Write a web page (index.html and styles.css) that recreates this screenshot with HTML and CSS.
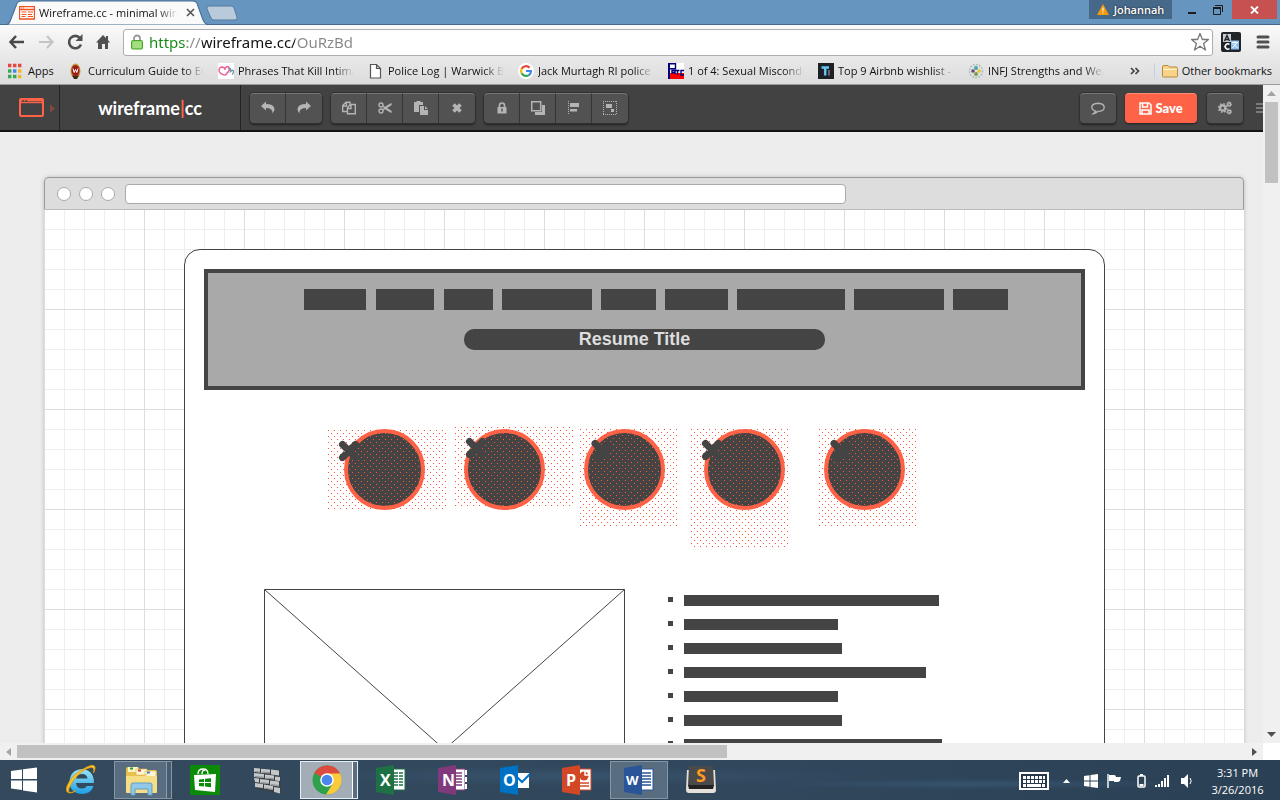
FILE: index.html
```html
<!DOCTYPE html>
<html lang="en">
<head>
<meta charset="utf-8">
<title>Wireframe.cc - minimal wireframing tool</title>
<link rel="stylesheet" href="styles.css">
</head>
<body>
<header class="browser">
  <div class="tabstrip">
    <div class="tab">
      <svg class="tab-shape" viewBox="0 0 204 24" preserveAspectRatio="none"><path d="M0 24C5 24 6 21 7 18L13 3Q14 1 17 1H187Q190 1 191 3L197 19Q199 24 204 24Z" fill="#fafafa" stroke="#44698e"/></svg>
      <svg class="tab-icon" viewBox="0 0 16 14"><path d="M.5 .5h15v12.500h-15zM0 3.500h16" fill="#fff" stroke="#f4511e" stroke-width="1.300"/><path d="M2.500 6h5M2.500 8.500h5M2.500 10.500h4M9 6h5M9 8.500h4M9 10.500h5M2 2h1M4 2h1" stroke="#f4511e"/></svg>
      <span class="tab-title fade">Wireframe.cc - minimal wireframing</span>
      <button class="plain tab-close" aria-label="Close tab"><svg width="9" height="9" viewBox="0 0 9 9"><path d="M1 1l7 7M8 1l-7 7" stroke="#555" stroke-width="1.600"/></svg></button>
    </div>
    <button class="plain newtab" aria-label="New tab"><svg width="32" height="16" viewBox="0 0 32 16"><path d="M3 1h22q2 0 3 2l3 9q1 3-2 3H8q-2 0-3-2L1 4q-1-3 2-3z" fill="#b9cbdb" stroke="#55799d"/></svg></button>
    <button class="plain user"><svg width="12" height="11" viewBox="0 0 12 11"><path d="M6 0l6 11H0z" fill="#f59a0c"/><path d="M6 3.500v4M6 8.500v1" stroke="#fff"/></svg>Johannah</button>
    <div class="winctl">
      <button class="plain" aria-label="Minimize"><svg width="10" height="10" viewBox="0 0 10 10"><path d="M1 8h8" stroke="#1d1d1d" stroke-width="2"/></svg></button>
      <button class="plain" aria-label="Restore"><svg width="12" height="12" viewBox="0 0 12 12"><path d="M1.500 4.500h7v6h-7zM3 1.500h7.500V8" fill="none" stroke="#1d1d1d"/><path d="M1 4h8" stroke="#1d1d1d" stroke-width="2"/></svg></button>
      <button class="plain close" aria-label="Close"><svg width="9" height="8" viewBox="0 0 9 8"><path d="M1 .5l7 7M8 .5l-7 7" stroke="#fff" stroke-width="1.800"/></svg></button>
    </div>
  </div>
  <div class="navbar">
    <button class="plain" aria-label="Back"><svg width="18" height="16" viewBox="0 0 18 16"><path d="M8 2L2.500 8 8 14M3 8h13" fill="none" stroke="#484848" stroke-width="2.500"/></svg></button>
    <button class="plain" aria-label="Forward"><svg width="18" height="16" viewBox="0 0 18 16"><path d="M10 2l5.500 6L10 14M15 8H2" fill="none" stroke="#c4c4c4" stroke-width="2.200"/></svg></button>
    <button class="plain" aria-label="Reload"><svg width="18" height="18" viewBox="0 0 18 18"><path d="M14 5A6.200 6.200 0 1 0 15 11.500" fill="none" stroke="#505050" stroke-width="2.600"/><path d="M16.500 1v7h-7z" fill="#505050"/></svg></button>
    <button class="plain" aria-label="Home"><svg width="16" height="16" viewBox="0 0 16 16"><path d="M8 1L1 8.500h2V15h4v-5h3v5h3V8.500h2L13 6V2h-2v2z" fill="#505050"/></svg></button>
    <label class="omnibox">
      <svg width="12" height="16" viewBox="0 0 12 16"><path d="M3 8V4.500a3 3 0 0 1 6 0V8" fill="none" stroke="#999" stroke-width="1.800"/><rect x=".5" y="6.500" width="11" height="8.500" rx="1" fill="#8fd568" stroke="#4ba32f"/><path d="M2 9h8M2 11h8M2 13h8" stroke="#b6e89b"/></svg>
      <input class="url" type="text" value="https://wireframe.cc/OuRzBd" aria-label="Address">
      <svg width="20" height="20" viewBox="0 0 20 20"><path d="M10 1.500l2.400 6h6l-4.800 4 1.900 6.500L10 14.200 4.500 18l1.900-6.500-4.800-4h6z" fill="#fff" stroke="#777" stroke-width="1.300" stroke-linejoin="round"/></svg>
    </label>
    <button class="plain" aria-label="Translate"><svg width="20" height="20" viewBox="0 0 20 20"><rect width="20" height="20" rx="2" fill="#202429"/><path d="M2 2h8v8H2z" fill="#c9ced3"/><path d="M3.500 9L6 3.500 8.500 9M4.500 7.500h3" fill="none" stroke="#202429" stroke-width="1.400"/><path d="M8.500 12.500a2.600 2.600 0 1 0 0 4" fill="none" stroke="#fff" stroke-width="1.600"/><rect x="10" y="8.500" width="8" height="9" fill="#8dc1f2"/><path d="M11 10.500h6M14 9v2M16 10.500l-4.500 5.500M12 11.500l4.500 4.500" stroke="#fff"/></svg></button>
    <button class="plain menu-btn" aria-label="Menu"><svg width="14" height="14" viewBox="0 0 14 14"><path d="M2 2h10M2 7h10M2 12h10" stroke="#505050" stroke-width="3" stroke-linecap="round"/></svg></button>
  </div>
  <nav class="bookmarks">
    <a href="#" class="bm apps"><svg width="16" height="16" viewBox="0 0 16 16"><path d="M0 2.500h3.400M5 2.500h3.400M10 2.500h3.400" stroke="#e8453c" stroke-width="3.400"/><path d="M0 8h3.400" stroke="#34a853" stroke-width="3.400"/><path d="M5 8h3.400" stroke="#4285f4" stroke-width="3.400"/><path d="M10 8h3.400M10 13.500h3.400" stroke="#f7b529" stroke-width="3.400"/><path d="M0 13.500h3.400M5 13.500h3.400" stroke="#34a853" stroke-width="3.400"/></svg><span>Apps</span></a>
    <a href="#" class="bm"><svg width="16" height="16" viewBox="0 0 16 16"><ellipse cx="7.500" cy="8" rx="5" ry="7.500" fill="#c79a3a"/><ellipse cx="7.500" cy="7.500" rx="4" ry="5.500" fill="#a01a1a"/><path d="M5 5.500l1.200 4 1.300-3 1.300 3 1.200-4" fill="none" stroke="#fff"/><path d="M4 12q3.500 2 7 0l-2 4H6z" fill="#3b2a1a"/></svg><span class="fade">Curriculum Guide to Education</span></a>
    <a href="#" class="bm"><svg width="16" height="16" viewBox="0 0 16 16"><path d="M0 0h16v16H0z" fill="#fff"/><path d="M8 12Q3 12 1.200 8.500 .5 4.500 4 4q2.500 0 3 2.500Q8 2.500 10.500 4q2 2-.5 5l-2.500 3" fill="none" stroke="#ee5f98" stroke-width="1.500"/><path d="M10 5.500q3-1.500 2.500 3 2.500-2.500 3 0 0 2-1.500 3" fill="none" stroke="#6b93a8" stroke-width="1.300"/></svg><span class="fade">Phrases That Kill Intimacy</span></a>
    <a href="#" class="bm"><svg width="16" height="16" viewBox="0 0 16 16"><path d="M2.500 1.500h6l4 4v9.500h-10zM8.500 1.500v4h4" fill="#fff" stroke="#555" stroke-width="1.200"/></svg><span class="fade">Police Log | Warwick Beacon</span></a>
    <a href="#" class="bm"><svg width="16" height="16" viewBox="0 0 16 16"><circle cx="8" cy="8" r="8" fill="#fff"/><g fill="none" stroke-width="2.200"><path d="M11.500 4.600A5 5 0 0 0 3.600 5.800" stroke="#ea4335"/><path d="M3.600 5.800a5 5 0 0 0 0 4.400" stroke="#fbbc05"/><path d="M3.600 10.200a5 5 0 0 0 7.600 1.600" stroke="#34a853"/><path d="M11.200 11.800A5 5 0 0 0 13 8H8" stroke="#4285f4"/></g></svg><span class="fade">Jack Murtagh RI police officer</span></a>
    <a href="#" class="bm"><svg width="16" height="16" viewBox="0 0 16 16"><path d="M0 0h16v16H0z" fill="#fff"/><path d="M2 10h14v6H2z" fill="#f00"/><path d="M0 0h2v16H0z" fill="#00007c"/><path d="M1 .8h6.500v5H1M4 11V7.500h3V11M4 9.500h3M7.500 7.500h4M9.500 7.500V12M16 7.500h-3V12h3" fill="none" stroke="#00007c" stroke-width="1.400"/></svg><span class="fade">1 of 4: Sexual Misconduct</span></a>
    <a href="#" class="bm"><svg width="16" height="16" viewBox="0 0 16 16"><path d="M0 0h16v16H0z" fill="#1d2126"/><path d="M3.500 4.500h7.500M7.200 4v8.500" stroke="#62c4f0" stroke-width="2.500"/><path d="M11 7v5.500" stroke="#667" stroke-width="2"/></svg><span class="fade">Top 9 Airbnb wishlist - Airbnb</span></a>
    <a href="#" class="bm"><svg width="16" height="16" viewBox="0 0 16 16"><circle cx="8" cy="8" r="6.500" fill="none" stroke="#9cb9ac" stroke-width="1.500" stroke-dasharray="1.500 1.500"/><circle cx="8" cy="5" r="2" fill="#49a5ad"/><circle cx="5" cy="8" r="1.800" fill="#6d486f"/><circle cx="11" cy="8" r="1.800" fill="#e3c52c"/><circle cx="8" cy="11" r="2" fill="#77a14d"/></svg><span class="fade">INFJ Strengths and Weaknesses</span></a>
    <button class="plain more" aria-label="More bookmarks"><svg width="10" height="8" viewBox="0 0 10 8"><path d="M1 1l3 3-3 3M5.500 1l3 3-3 3" fill="none" stroke="#444" stroke-width="1.700"/></svg></button>
    <a href="#" class="bm other"><svg width="16" height="16" viewBox="0 0 16 16"><path d="M.5 13V4q0-1.500 1.500-1.500h4L7.500 4H14q1.500 0 1.500 1.500V13q0 1-1 1h-13q-1 0-1-1z" fill="#f7d48a" stroke="#b98a3c"/><path d="M1.500 6.500h13" stroke="#fff1cc"/></svg><span>Other bookmarks</span></a>
  </nav>
</header>

<main class="page">
  <div class="view">
    <div class="appbar">
      <button class="plain logo" aria-label="Template"><svg width="37" height="20" viewBox="0 0 37 20"><rect x="1" y="1" width="23" height="17" rx="1" fill="none" stroke="#ff6347" stroke-width="2"/><path d="M1 4.500h23" stroke="#ff6347" stroke-width="1.400"/><path d="M2 2.500h1.500M5 2.500h1.500M8 2.500h15" stroke="#ff6347" stroke-width="1.400"/><path d="M31 6.500v8l5-4z" fill="#84493e"/></svg></button>
      <a class="brand" href="#">wireframe<i>|</i>cc</a>
      <div class="tools">
        <div class="group">
          <button aria-label="Undo"><svg width="14" height="14" viewBox="0 0 14 14"><path d="M0 5l5-4.500V3q8 0 8.500 5 0 2.500-2 4.500 .5-5.500-6.500-5.500v2.500z"/></svg></button>
          <button aria-label="Redo"><svg width="14" height="14" viewBox="0 0 14 14"><path d="M14 5L9 .5V3Q1 3 .5 8q0 2.500 2 4.500Q2 7 9 7v2.500z"/></svg></button>
        </div>
        <div class="group">
          <button aria-label="Copy"><svg class="ln" width="14" height="14" viewBox="0 0 14 14"><path d="M5 10.500H.7V4.500L4 1.200h4V4M4.500 1v4H1M5.500 12.800V6.500L8.500 3.500h4.800v9.300zM9 3.500v4H5.500"/></svg></button>
          <button aria-label="Cut"><svg class="ln" width="14" height="14" viewBox="0 0 14 14"><circle cx="3" cy="4" r="2"/><circle cx="3" cy="10" r="2"/><path d="M4.600 5.200L13.500 10.500M4.600 8.800L13.500 3.500M6 7l7.500 4.500M6 7l7.500-4.500"/></svg></button>
          <button aria-label="Paste"><svg width="14" height="14" viewBox="0 0 14 14"><path d="M0 1h2.500V0h4v1H9v3H5v7H0z"/><path d="M6 5h4v4h4v5H6zM11 5l3 3h-3z"/></svg></button>
          <button aria-label="Delete"><svg width="14" height="14" viewBox="0 0 14 14"><path d="M3.500 3.500l7 7M10.500 3.500l-7 7" stroke="#b4b4b4" stroke-width="3.600"/></svg></button>
        </div>
        <div class="group">
          <button aria-label="Lock"><svg width="14" height="14" viewBox="0 0 14 14"><path d="M4.500 7V4.500a2.500 2.500 0 0 1 5 0V7" fill="none" stroke="#b4b4b4" stroke-width="1.600"/><path d="M2.500 6h9v6.500h-9z"/><path d="M7 7.500v3" stroke="#555" stroke-width="1.500"/></svg></button>
          <button aria-label="Arrange"><svg width="14" height="14" viewBox="0 0 14 14"><path d="M.7 .7h9v9h-9z" fill="none" stroke="#b4b4b4" stroke-width="1.500"/><path d="M11 4h3v10H4v-3h7z"/></svg></button>
          <button aria-label="Align"><svg width="14" height="14" viewBox="0 0 14 14"><path d="M1.500 0v14" stroke="#b4b4b4" stroke-dasharray="1 1"/><path d="M3 2h9v4H3zM3 8h7v2.500H3z"/></svg></button>
          <button aria-label="Group"><svg width="14" height="14" viewBox="0 0 14 14"><path d="M.5 0v14M13.500 0v14M0 .5h14M0 13.500h14" fill="none" stroke="#b4b4b4" stroke-dasharray="1 1"/><path d="M3 3h6v4H3zM8 8h3v3H8z"/></svg></button>
        </div>
        <span class="spacer"></span>
        <div class="group"><button aria-label="Comments"><svg class="ln" width="14" height="14" viewBox="0 0 14 14"><path d="M5.500 10.300Q1 9.500 .8 6.300 1 2.500 7 2.300q6 .2 6.200 4T7 10.400q-2 2.200-4.500 2.300 1.800-1.200 1.500-2.700"/></svg></button></div>
        <button class="save"><svg width="13" height="13" viewBox="0 0 13 13"><path d="M1 1h9l2 2v9H1zM3.500 1v4h5V1M3 12V8h7v4" fill="none" stroke="#fff" stroke-width="1.500"/></svg>Save</button>
        <div class="group"><button aria-label="Settings"><svg width="14" height="14" viewBox="0 0 14 14"><g fill="none" stroke="#b4b4b4"><circle cx="4.700" cy="7" r="2.600" stroke-width="2.200"/><circle cx="4.700" cy="7" r="4.200" stroke-width="1.500" stroke-dasharray="1.700 1.600"/><circle cx="11.200" cy="3.300" r="1.500" stroke-width="1.500"/><circle cx="11.200" cy="3.300" r="2.400" stroke-dasharray="1 .9"/><circle cx="11.200" cy="10.700" r="1.500" stroke-width="1.500"/><circle cx="11.200" cy="10.700" r="2.400" stroke-dasharray="1 .9"/></g></svg></button></div>
        <button class="plain panel" aria-label="Panel"><svg width="7" height="12" viewBox="0 0 7 12"><path d="M0 2h7M0 6h7M0 10h7" stroke="#b4b4b4" stroke-width="1.200"/></svg></button>
      </div>
    </div>
    <div class="stage">
      <section class="mock">
        <div class="mock-bar"><i></i><i></i><i></i><input type="text" aria-label="Mock address"></div>
        <div class="canvas">
          <div class="sheet"></div>
          <div class="hero">
            <div class="menu"><b style="width:62px"></b><b style="width:58px"></b><b style="width:49px"></b><b style="width:90px"></b><b style="width:55px"></b><b style="width:63px"></b><b style="width:108px"></b><b style="width:90px"></b><b style="width:55px"></b></div>
            <h1>Resume Title</h1>
          </div>
          <svg class="dots" width="600" height="130" viewBox="320 420 600 130">
            <defs>
              <pattern id="d1" x="328" y="430" width="6" height="6" patternUnits="userSpaceOnUse"><path d="M0 0h1v1h-1zM3 3h1v1h-1z"/></pattern>
              <pattern id="d2" x="455" y="427" width="6" height="6" patternUnits="userSpaceOnUse"><path d="M0 0h1v1h-1zM3 3h1v1h-1z"/></pattern>
              <pattern id="d3" x="580" y="429" width="6" height="6" patternUnits="userSpaceOnUse"><path d="M0 0h1v1h-1zM3 3h1v1h-1z"/></pattern>
              <pattern id="d4" x="691" y="429" width="6" height="6" patternUnits="userSpaceOnUse"><path d="M0 0h1v1h-1zM3 3h1v1h-1z"/></pattern>
              <pattern id="d5" x="819" y="429" width="6" height="6" patternUnits="userSpaceOnUse"><path d="M0 0h1v1h-1zM3 3h1v1h-1z"/></pattern>
            </defs>
            <g fill="#444" stroke="#ff6347" stroke-width="4"><circle cx="384.500" cy="469.500" r="38.500"/><circle cx="504.500" cy="469.500" r="38.500"/><circle cx="624.500" cy="469.500" r="38.500"/><circle cx="744.500" cy="469.500" r="38.500"/><circle cx="864.500" cy="469.500" r="38.500"/></g>
            <rect x="328" y="430" width="118" height="79" fill="url(#d1)"/>
            <rect x="455" y="427" width="118" height="79" fill="url(#d2)"/>
            <rect x="580" y="429" width="97" height="97" fill="url(#d3)"/>
            <rect x="691" y="429" width="97" height="118" fill="url(#d4)"/>
            <rect x="819" y="429" width="97" height="97" fill="url(#d5)"/>
            <path d="M342.500 444.500l13 13M355.500 444.500l-13 13M469.500 441.500l13 13M482.500 441.500l-13 13M595 443.500l13 13M608 446l-11 11M705.500 443.500l13 13M718.500 443.500l-13 13M834 443.500l13 13M847 446l-11 11" stroke="#444" stroke-width="7" stroke-linecap="round"/>
          </svg>
          <svg class="picture" width="361" height="321" viewBox="0 0 361 321"><path d="M.5 .5h360v320H.5zL360.500 320.500M360.500 .5L.5 320.500" fill="none" stroke="#444"/></svg>
          <ul class="lines"><li><b style="width:255px"></b></li><li><b style="width:154px"></b></li><li><b style="width:158px"></b></li><li><b style="width:242px"></b></li><li><b style="width:154px"></b></li><li><b style="width:158px"></b></li><li><b style="width:258px"></b></li></ul>
        </div>
      </section>
    </div>
  </div>
  <div class="vbar">
    <button class="plain" aria-label="Scroll up"><svg width="9" height="5" viewBox="0 0 9 5"><path d="M4.500 0L9 5H0z" fill="#a3a3a3"/></svg></button>
    <div class="vtrack"><div class="vthumb"></div></div>
    <button class="plain" aria-label="Scroll down"><svg width="9" height="5" viewBox="0 0 9 5"><path d="M4.500 5L9 0H0z" fill="#505050"/></svg></button>
  </div>
  <div class="hbar">
    <button class="plain" aria-label="Scroll left"><svg width="5" height="8" viewBox="0 0 5 8"><path d="M0 4L5 0v8z" fill="#a3a3a3"/></svg></button>
    <div class="htrack"><div class="hthumb"></div></div>
    <button class="plain" aria-label="Scroll right"><svg width="5" height="8" viewBox="0 0 5 8"><path d="M5 4L0 0v8z" fill="#505050"/></svg></button>
  </div>
</main>

<footer class="taskbar">
  <button class="plain start" aria-label="Start"><svg width="26" height="26" viewBox="0 0 26 26"><path d="M0 4l11-1.500V12H0zM12 2.300L26 .5V12H12zM0 13.500h11V23L0 21.500zM12 13.500h14V25.500l-14-2z" fill="#fff"/></svg></button>
  <button class="plain task" aria-label="Internet Explorer"><svg width="32" height="32" viewBox="0 0 32 32"><defs><linearGradient id="ie" x2="0" y2="1"><stop stop-color="#9be4fb"/><stop offset="1" stop-color="#1c9ee4"/></linearGradient></defs><path d="M29 19H11q.5 5.500 6 5.500 3.500 0 5-2.500h6.500Q26 30 17 30 5 29.500 4.500 18 5 6 17 5q12 1 12 14zM11 14.500h11.500Q22 10 17 10t-6 4.500z" fill="url(#ie)"/><path d="M5 29Q0 29 2 22 7 10 20 4 29-1 30 3q.5 2-1.500 6 1.500-6-3-5.500Q17 5 8 17 1 28 5 28.500q3 0 6-2Q8 29 5 29z" fill="#f7c52a" stroke="#d99b10" stroke-width=".8"/></svg></button>
  <button class="plain task open stack" aria-label="File Explorer"><svg width="32" height="32" viewBox="0 0 32 32"><path d="M1 29V5q0-2 2-2h10l2 3h15q2 0 2 2v21z" fill="#e7c04d"/><path d="M3 3h10v5H3z" fill="#fff3c0"/><path d="M11 5h11v6H11zM20 7h11v6H20z" fill="#fff6d4" stroke="#d8b14a" stroke-width=".6"/><path d="M5 4.500h3" stroke="#2f9b38" stroke-width="2"/><path d="M13 6.500h3" stroke="#cc4437" stroke-width="2"/><path d="M22 8.500h3" stroke="#3a87d0" stroke-width="2"/><path d="M1 12h31v15q0 2-2 2H3q-2 0-2-2z" fill="#f6de86"/><path d="M6 31V21q0-2 2-2h17q2 0 2 2v10h-4v-6H10v6z" fill="#91c8e8" stroke="#5f9fc7"/></svg></button>
  <button class="plain task" aria-label="Store"><svg width="30" height="30" viewBox="0 0 30 30"><path d="M0 0h30v30H0z" fill="#0a8a07"/><path d="M4 10l22-1-1 18-20-2z" fill="#fff"/><path d="M8 9q0-5 5-5t5 5M12 9q0-4 3-4" fill="none" stroke="#fff" stroke-width="1.300"/><path d="M9 14.500l5-.6V17H9zM15 13.800l6-.6V17h-6zM9 18h5v3.500L9 21zM15 18h6v4.200l-6-.6z" fill="#0a8a07"/></svg></button>
  <button class="plain task" aria-label="Firewall"><svg width="32" height="32" viewBox="0 0 32 32"><path d="M3 4l26 2 1 24L4 24z" fill="#3b3f42"/><g fill="#c4c8ca"><path d="M3 4l6 .6v4L3 8zM10 4.700l9 .8v4l-9-.8zM20 5.600l8 .8v5l-8-1zM3 9l10 1v4L3 13zM14 10.500l9 1v4l-9-1zM24 12.500l5 .5v4l-5-.5zM3 14l5 .6v4L4 18zM9 15l9 1v4l-9-1zM19 16.500l9 1v5l-9-1.500zM4 19l8 1v4l-8-1zM13 20.500l9 1.500v4l-9-1.500zM23 23l6 1v5.500l-6-1.500z"/></g><path d="M4 7.500l5 .5M11 8l8 .6M4 12.500l9 .8M15 14l8 .8M10 18.500l8 1M20 20.500l8 1M14 24l8 1.500" stroke="#8b9093"/></svg></button>
  <button class="plain task open active stack" aria-label="Chrome"><svg width="30" height="30" viewBox="0 0 30 30"><circle cx="15" cy="15" r="14.500" fill="#2fa04c"/><path d="M15 15L2.300 8A14.500 14.500 0 0 1 28 8.500z" fill="#dd4b3e"/><path d="M15 8.500h13A14.500 14.500 0 0 1 14 29.500l7-11.200z" fill="#fbcb3c"/><circle cx="15" cy="15" r="6.800" fill="#fff"/><circle cx="15" cy="15" r="5.300" fill="#4a86ee"/></svg></button>
  <button class="plain task" aria-label="Excel"><svg width="30" height="30" viewBox="0 0 30 30"><path d="M15 4h14v21H15z" fill="#fff" stroke="#1e7145"/><path d="M18 8h4M23 8h4M18 11h4M23 11h4M18 14h4M23 14h4M18 17h4M23 17h4M18 20h4M23 20h4" stroke="#1e7145" stroke-width="1.500"/><path d="M0 3l18-3v30L0 27z" fill="#1e7145"/><text x="4" y="21" class="glyph">X</text></svg></button>
  <button class="plain task" aria-label="OneNote"><svg width="30" height="30" viewBox="0 0 30 30"><path d="M15 4h12v21H15z" fill="#fff" stroke="#80397b"/><path d="M18 8h6M18 11h6M18 14h6M18 17h6M18 20h6" stroke="#80397b" stroke-width="1.500"/><path d="M28 5v5M28 12v5M28 19v5" stroke="#fff" stroke-width="2"/><path d="M0 3l18-3v30L0 27z" fill="#80397b"/><text x="4" y="21" class="glyph">N</text></svg></button>
  <button class="plain task" aria-label="Outlook"><svg width="30" height="30" viewBox="0 0 30 30"><path d="M15 8h14v15H15z" fill="#fff"/><path d="M17 12l5 5 8-8" fill="none" stroke="#0072c6" stroke-width="2"/><path d="M0 3l18-3v30L0 27z" fill="#0072c6"/><text x="3" y="21" class="glyph">O</text></svg></button>
  <button class="plain task" aria-label="PowerPoint"><svg width="30" height="30" viewBox="0 0 30 30"><path d="M15 4h14v21H15z" fill="#fff" stroke="#d24726"/><circle cx="22" cy="11" r="4.500" fill="#d24726"/><path d="M23 5v5h5" fill="none" stroke="#fff" stroke-width="1.500"/><path d="M18 18h9M18 21h9" stroke="#d24726" stroke-width="1.500"/><path d="M0 3l18-3v30L0 27z" fill="#d24726"/><text x="4" y="21" class="glyph">P</text></svg></button>
  <button class="plain task open" aria-label="Word"><svg width="30" height="30" viewBox="0 0 30 30"><path d="M15 4h14v21H15z" fill="#fff" stroke="#2a5699"/><path d="M18 8h9M18 11h9M18 14h9M18 17h9M18 20h9" stroke="#2a5699" stroke-width="1.500"/><path d="M0 3l18-3v30L0 27z" fill="#2a5699"/><text x="2" y="20" class="glyph small">W</text></svg></button>
  <button class="plain task" aria-label="Sublime Text"><svg width="32" height="30" viewBox="0 0 32 30"><path d="M2 5h28l1 20q0 3-3 3H4q-3 0-3-3z" fill="#e4e1da"/><path d="M4 1h24l1 19-2 3H5l-2-3z" fill="#4a4a4a"/><path d="M3 20h26l-1 4H4z" fill="#222"/><text x="11" y="17" class="glyph orange">S</text></svg></button>
  <div class="tray">
    <svg width="30" height="18" viewBox="0 0 30 18"><rect x="1" y="1" width="28" height="16" fill="#26384a" stroke="#fff" stroke-width="2"/><path d="M4 5.500h22M4 9.500h22" stroke="#fff" stroke-width="3" stroke-dasharray="3 1"/><path d="M4 13.500h3M8 13.500h14M23 13.500h3" stroke="#fff" stroke-width="3"/></svg>
    <svg width="7" height="4" viewBox="0 0 7 4"><path d="M3.500 0L7 4H0z" fill="#fff"/></svg>
    <svg width="14" height="14" viewBox="0 0 14 14"><path d="M0 2l5.500-.8v5.300H0zM6.500 1L14 0v6.500H6.500zM0 7.500h5.500v5.300L0 12zM6.500 7.500H14V14l-7.500-1z" fill="#fff"/></svg>
    <svg width="15" height="14" viewBox="0 0 15 14"><path d="M1 0v14" stroke="#fff" stroke-width="1.400"/><path d="M2 1h5q2 0 2 2h5l-1 4-2 1H7V7H2z" fill="#fff"/></svg>
    <svg class="batt" width="9" height="14" viewBox="0 0 9 14"><path d="M3 0h3v2H3z" fill="#fff"/><rect x="1" y="2" width="7" height="11" rx="1" fill="none" stroke="#fff" stroke-width="1.500"/><path d="M2.500 11h4" stroke="#fff" stroke-width="2"/></svg>
    <svg width="15" height="12" viewBox="0 0 15 12"><path d="M1 12v-2M4 12V9M7 12V6M10 12V3M13 12V0" stroke="#fff" stroke-width="2"/></svg>
    <svg width="13" height="14" viewBox="0 0 13 14"><path d="M0 4h3l4-4v14l-4-4H0z" fill="#fff"/><path d="M9 4q2.500 3 0 6" fill="none" stroke="#fff"/></svg>
  </div>
  <div class="clock"><time>3:31 PM</time><time>3/26/2016</time></div>
</footer>
</body>
</html>
```
FILE: styles.css
```css
* { box-sizing: border-box; }

body {
  margin: 0;
  height: 100vh;
  overflow: hidden;
  display: flex;
  flex-direction: column;
  font: 11px/16px "Open Sans", "Noto Sans", sans-serif;
  color: #111;
}

svg { display: block; flex: none; }
button { font: inherit; }
a { color: inherit; text-decoration: none; }

.plain {
  border: 0;
  padding: 0;
  margin: 0;
  background: none;
  display: flex;
  align-items: center;
  justify-content: center;
}

.fade {
  flex: 1;
  min-width: 0;
  overflow: hidden;
  white-space: nowrap;
  -webkit-mask-image: linear-gradient(to left, transparent, #000 20px);
  mask-image: linear-gradient(to left, transparent, #000 20px);
}

/* browser frame */
.browser {
  flex: none;
  background: linear-gradient(#fafafa 25px, #e8e8e8 58px, #dcdcdc);
  border-bottom: 1px solid #9c9c9c;
}

.tabstrip {
  height: 25px;
  display: flex;
  align-items: flex-start;
  background: #6696c0;
  border-bottom: 1px solid #44698e;
}

.tab {
  position: relative;
  width: 206px;
  height: 25px;
  margin-left: 4px;
  padding: 0 11px 0 15px;
  display: flex;
  align-items: center;
  gap: 4px;
}

.tab-shape { position: absolute; inset: 0; width: 100%; height: 25px; }
.tab-icon { position: relative; width: 16px; height: 14px; }
.tab-title { position: relative; }
.tab-close { position: relative; width: 17px; height: 17px; }
.newtab { margin: 5px 0 0 -4px; }

.user {
  margin-left: auto;
  width: 83px;
  height: 19px;
  gap: 5px;
  background: #46698a;
  color: #fff;
  font-weight: 600;
  text-shadow: 0 0 2px #111;
}

.winctl { display: flex; margin: 0 3px 0 7px; }
.winctl button { width: 26px; height: 19px; }
.winctl .close { width: 45px; margin-left: 1px; background: #c75050; }

.navbar {
  height: 33px;
  display: flex;
  align-items: center;
  gap: 11px;
  padding: 1px 10px 0 8px;
}
.menu-btn { margin-left: 4px; }

.omnibox {
  flex: 1;
  height: 27px;
  margin: 0 -3px 0 1px;
  display: flex;
  align-items: center;
  gap: 6px;
  padding: 0 2px 0 7px;
  background: #fff;
  border: 1px solid #adadad;
  border-radius: 3px;
}

.url {
  flex: 1;
  border: 0;
  padding: 0;
  outline: 0;
  font: 15px/22px "Noto Sans", "Open Sans", sans-serif;
  background: linear-gradient(to right, #128a12 38px, #888 38px 53px, #111 53px 146px, #888 146px);
  -webkit-background-clip: text;
  background-clip: text;
  -webkit-text-fill-color: transparent;
}

.bookmarks {
  height: 26px;
  display: flex;
  align-items: center;
  gap: 14px;
  padding: 0 8px;
}

.bm { flex: 0 1 136px; min-width: 0; display: flex; align-items: center; gap: 4px; }
.bm.apps { flex: 0 0 46px; }
.more { margin-left: auto; }
.bm.other { flex: none; white-space: nowrap; border-left: 1px solid #c3d2e0; padding-left: 7px; }

/* web page area with its scroll bars */
.page {
  flex: 1;
  min-height: 0;
  display: grid;
  grid-template-columns: minmax(0, 1fr) 17px;
  grid-template-rows: minmax(0, 1fr) 17px;
  background: #fff;
}

.view { overflow: hidden; background: #ededed; }

.vbar, .hbar { background: #f0f0f0; display: flex; }
.vbar { flex-direction: column; }
.vbar button, .hbar button { width: 17px; height: 17px; flex: none; }
.vtrack, .htrack { flex: 1; }
.vthumb { height: 13%; margin: 0 2px; background: #c1c1c1; }
.hthumb { width: 57.8%; height: 13px; margin: 2px 0; background: #c1c1c1; }

.appbar {
  height: 47px;
  display: flex;
  background: #424242;
  border-bottom: 2px solid #161212;
}

.logo { width: 60px; padding-left: 15px; border-right: 1px solid #222; }

.brand {
  width: 181px;
  display: flex;
  align-items: center;
  justify-content: center;
  border-right: 1px solid #222;
  color: #fff;
  font: 700 18px/24px Lato, sans-serif;
}
.brand i { color: #ff6347; font-style: normal; }

.tools {
  flex: 1;
  min-width: 0;
  display: flex;
  align-items: center;
  gap: 9px;
  padding-left: 9px;
}
.spacer { flex: 1; }

.group {
  display: flex;
  border-radius: 4px;
  box-shadow: 0 0 0 1px #303030, 0 2px 2px #222;
  background: #525252;
}
.group button {
  width: 36px;
  height: 30px;
  padding: 0;
  border: 0;
  border-top: 1px solid #777;
  border-right: 1px solid #353535;
  background: none;
  display: flex;
  align-items: center;
  justify-content: center;
}
.group button:first-child { border-top-left-radius: 4px; }
.group button:last-child { border-right: 0; border-top-right-radius: 4px; }
.group svg { fill: #b4b4b4; }
.group .ln { fill: none; stroke: #b4b4b4; stroke-width: 1.400; }

.save {
  width: 72px;
  height: 30px;
  margin: 0 1px 0 0;
  padding: 0;
  display: flex;
  align-items: center;
  justify-content: center;
  gap: 3px;
  border: 0;
  border-top: 1px solid #ff8e79;
  border-radius: 4px;
  background: #ff6347;
  box-shadow: 0 1px 2px #222;
  color: #fff;
  font: 900 13px/16px Lato, sans-serif;
}

.panel { width: 7px; overflow: hidden; margin: 0 0 0 4px; }

.stage { padding: 45px 19px 0 44px; }

.mock { box-shadow: 0 0 4px #bbb; border-radius: 5px 5px 0 0; }

.mock-bar {
  height: 33px;
  display: flex;
  align-items: center;
  gap: 8px;
  padding: 0 12px;
  background: #ddd;
  border: 1px solid #999;
  border-bottom-color: #bbb;
  border-radius: 5px 5px 0 0;
}
.mock-bar i { width: 14px; height: 14px; border: 1px solid #aaa; border-radius: 50%; background: #fff; }
.mock-bar input {
  width: 61.4%;
  height: 20px;
  margin-left: 2px;
  padding: 0 4px;
  border: 1px solid #aaa;
  border-radius: 4px;
  background: #fff;
}

/* drawing surface: a 20px grid with a heavier line every 100px */
.canvas {
  position: relative;
  height: 900px;
  margin-top: -1px;
  border-top: 1px solid #bbb;
  background-color: #fff;
  background-image:
    linear-gradient(to right, #ddd 1px, transparent 1px),
    linear-gradient(#ddd 1px, transparent 1px),
    linear-gradient(to right, #eee 1px, transparent 1px),
    linear-gradient(#eee 1px, transparent 1px);
  background-size: 100px 100px, 100px 100px, 20px 20px, 20px 20px;
  background-origin: border-box;
}

.sheet {
  position: absolute;
  left: 140px;
  top: 39px;
  width: 921px;
  height: 840px;
  background: #fff;
  border: 1px solid #444;
  border-radius: 16px;
}

.hero {
  position: absolute;
  left: 160px;
  top: 59px;
  width: 881px;
  height: 121px;
  padding: 16px 0 0;
  display: flex;
  flex-direction: column;
  align-items: center;
  gap: 19px;
  background: #a9a9a9;
  border: 4px solid #444;
}
.menu { display: flex; gap: 9px; padding-left: 23px; }
.menu b { height: 21px; background: #444; }
.menu b:nth-child(-n+2) { margin-right: 1px; }
.hero h1 {
  width: 361px;
  margin: 0;
  padding-right: 20px;
  border-radius: 10px;
  background: #444;
  color: #ddd;
  text-align: center;
  font: bold 18px/21px "Liberation Sans", sans-serif;
}

.dots { position: absolute; left: 276px; top: 210px; }
.dots pattern { fill: #ff5335; }
.picture { position: absolute; left: 220px; top: 379px; }

.lines {
  position: absolute;
  left: 624px;
  top: 385px;
  margin: 0;
  padding: 0;
  list-style: none;
  display: grid;
  gap: 13px;
}
.lines li { display: flex; gap: 11px; height: 11px; }
.lines li::before { content: ""; width: 5px; height: 5px; margin-top: 2px; background: #444; }
.lines b { height: 11px; background: #444; }

/* desktop task bar */
.taskbar {
  flex: none;
  height: 40px;
  display: flex;
  align-items: stretch;
  gap: 4px;
  background:
    radial-gradient(ellipse at 45% 40%, #36526c, transparent 30%),
    radial-gradient(ellipse at 76% 60%, #36536e, transparent 16%),
    linear-gradient(to right, #34495c, #30475c 60%, #2a4055);
}
.start { width: 48px; }
.task { width: 58px; margin: 1px 0; flex: 0 1 58px; }
.task.open { background: #596d80; border: 1px solid #8796a5; }
.task.stack { padding-right: 5px; box-shadow: inset -4px 0 0 #465c70, inset -5px 0 0 #8d9aa7; }
.task.active { background: #a3adb7; border-color: #e8ecef; box-shadow: inset -4px 0 0 #596d80, inset -5px 0 0 #fff; }
.glyph { font: bold 16px "Open Sans", sans-serif; fill: #fff; }
.glyph.small { font-size: 13px; }
.glyph.orange { fill: #ff9a22; font-size: 18px; }

.tray { margin-left: auto; display: flex; align-items: center; gap: 9px; padding-top: 2px; }
.tray svg:nth-child(-n+2) { margin-right: 5px; }
.tray .batt { margin-left: 6px; }
.tray svg:last-child { margin: 0 -3px 0 2px; }

.clock {
  width: 85px;
  display: flex;
  flex-direction: column;
  justify-content: center;
  text-align: center;
  color: #fff;
  line-height: 17px;
  padding-top: 2px;
}
```
